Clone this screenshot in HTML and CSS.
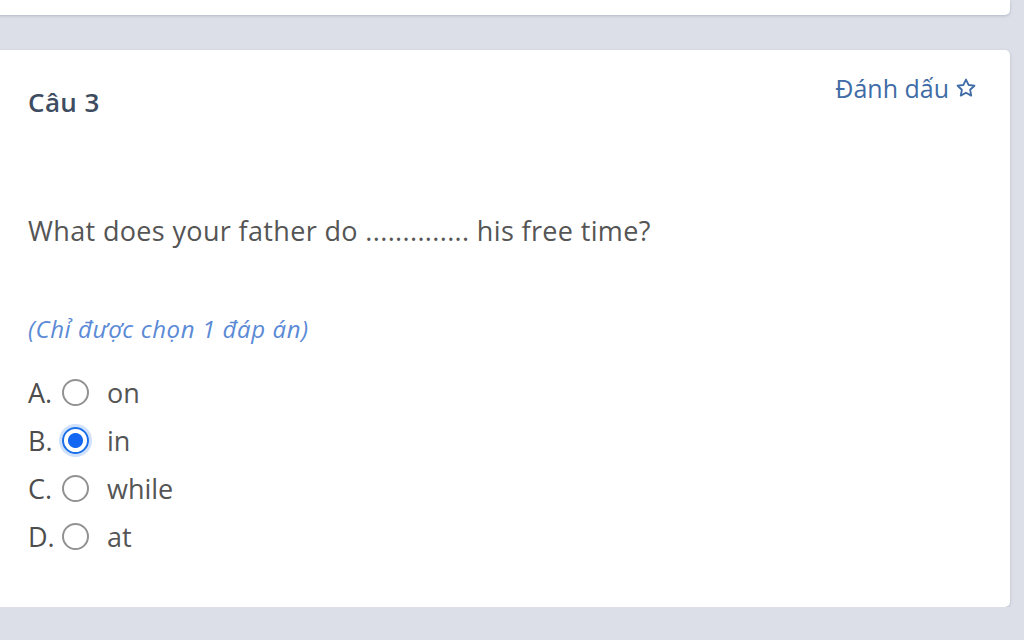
FILE: index.html
```html
<!DOCTYPE html>
<html>
<head>
  <meta charset="UTF-8">
  <title>Câu 3</title>
  <meta name="viewport" content="width=device-width, initial-scale=1">
  <link rel="stylesheet" href="styles.css">
</head>
<body>

<div class="page">
  <!-- previous question, scrolled mostly out of view -->
  <div class="card card-prev"></div>

  <!-- Question 3 -->
  <div class="card question">
    <div class="question-head">
      <div class="question-title">Câu 3</div>
      <button class="mark-btn">Đánh dấu
        <svg class="star" viewBox="0 0 24 24" width="22" height="22">
          <path d="M12 2.8l2.8 5.9 6.4.8-4.7 4.4 1.2 6.4L12 17.2l-5.7 3.1 1.2-6.4-4.7-4.4 6.4-.8z" fill="none" stroke="#3f6ca6" stroke-width="2" stroke-linejoin="round"/>
        </svg>
      </button>
    </div>

    <p class="question-text">What does your father do .............. his free time?</p>

    <p class="hint">(Chỉ được chọn 1 đáp án)</p>

    <div class="options">
      <label class="option">
        <span class="letter">A.</span>
        <input type="radio" name="q3" value="on">
        <span class="answer">on</span>
      </label>
      <label class="option">
        <span class="letter">B.</span>
        <input type="radio" name="q3" value="in" checked>
        <span class="answer">in</span>
      </label>
      <label class="option">
        <span class="letter">C.</span>
        <input type="radio" name="q3" value="while">
        <span class="answer">while</span>
      </label>
      <label class="option">
        <span class="letter">D.</span>
        <input type="radio" name="q3" value="at">
        <span class="answer">at</span>
      </label>
    </div>
  </div>
</div>

</body>
</html>
```

FILE: styles.css
```css
/* Grey page behind the question cards */
body {
  font-family: "Open Sans", "Noto Sans", sans-serif;
  margin: 0;
  padding: 0;
  background: #dcdfe8;
  overflow: hidden;
}
.page {
  display: flex;
  flex-direction: column;
  gap: 35px;
  margin-left: -6px;
  padding-right: 14px;
}
.card {
  background: #fff;
  border-radius: 5px;
  box-shadow: 0 1px 3px rgba(60, 70, 100, 0.25);
}
.card-prev {
  height: 15px;
  border-top-left-radius: 0;
  border-top-right-radius: 0;
}
.question {
  height: 557px;
  box-sizing: border-box;
  padding: 20px 33px 0 34px;
}
.question-head {
  display: flex;
  justify-content: space-between;
  align-items: flex-start;
}
.question-title {
  margin-top: 14px;
  font-size: 26px;
  font-weight: 600;
  letter-spacing: 0.4px;
  color: #3e4c61;
}
.mark-btn {
  display: flex;
  align-items: center;
  gap: 6px;
  margin-top: 1px;
  padding: 0;
  border: none;
  background: none;
  font-family: inherit;
  font-size: 25px;
  color: #3f6ca6;
  cursor: pointer;
}
.question-text {
  margin: 92px 0 0;
  font-size: 27px;
  letter-spacing: 0.35px;
  color: #555;
}
.hint {
  margin: 63px 0 0;
  font-size: 24px;
  font-style: italic;
  letter-spacing: 0.6px;
  color: #5b8ad6;
}
.options {
  margin-top: 30px;
  display: flex;
  flex-direction: column;
  gap: 13px;
}
.option {
  display: flex;
  align-items: center;
  height: 35px;
  font-size: 27px;
  color: #555;
}
.letter {
  width: 34px;
  font-weight: 500;
  color: #4d4d4d;
}
.option input {
  appearance: none;
  width: 27px;
  height: 27px;
  margin: 0 18px 0 0;
  border: 2px solid #929292;
  border-radius: 50%;
  box-sizing: border-box;
  background: #fff;
}
.option input:checked {
  border: 2px solid #1a6fe8;
  background: radial-gradient(circle, #1266f1 0 7px, #fff 8px);
  box-shadow: 0 0 0 3px rgba(120, 170, 245, 0.35);
}
```
